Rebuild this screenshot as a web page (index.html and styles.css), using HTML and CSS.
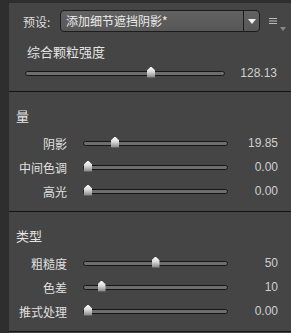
FILE: index.html
```html
<!DOCTYPE html>
<html lang="zh">
<head>
  <meta charset="UTF-8" />
  <title>颗粒</title>
  <link rel="stylesheet" href="styles.css">
</head>
<body>
  <div class="panel">
    <!-- 预设 + 综合强度 -->
    <section class="sec sec-top">
      <div class="preset-row">
        <span class="preset-label">预设:</span>
        <div class="dropdown">
          <span class="dropdown-text">添加细节遮挡阴影*</span>
          <span class="dropdown-btn"><span class="tri-down"></span></span>
        </div>
        <span class="menu-icon">
          <svg width="10" height="8" viewBox="0 0 10 8"><path d="M1 1.5h8M1 4h8M1 6.5h8" stroke="#bdbdbd" stroke-width="1"/></svg>
          <span class="menu-tri"></span>
        </span>
      </div>
      <div class="top-title">综合颗粒强度</div>
      <div class="top-slider">
        <div class="track"><span class="thumb" style="--p:0.637"></span></div>
        <span class="value">128.13</span>
      </div>
    </section>

    <!-- 量 -->
    <section class="sec">
      <div class="sec-title">量</div>
      <div class="row">
        <span class="label">阴影</span>
        <div class="track"><span class="thumb" style="--p:0.2"></span></div>
        <span class="value">19.85</span>
      </div>
      <div class="row">
        <span class="label">中间色调</span>
        <div class="track"><span class="thumb" style="--p:0"></span></div>
        <span class="value">0.00</span>
      </div>
      <div class="row">
        <span class="label">高光</span>
        <div class="track"><span class="thumb" style="--p:0"></span></div>
        <span class="value">0.00</span>
      </div>
    </section>

    <!-- 类型 -->
    <section class="sec">
      <div class="sec-title">类型</div>
      <div class="row">
        <span class="label">粗糙度</span>
        <div class="track"><span class="thumb" style="--p:0.5"></span></div>
        <span class="value">50</span>
      </div>
      <div class="row">
        <span class="label">色差</span>
        <div class="track"><span class="thumb" style="--p:0.1"></span></div>
        <span class="value">10</span>
      </div>
      <div class="row">
        <span class="label">推式处理</span>
        <div class="track"><span class="thumb" style="--p:0"></span></div>
        <span class="value">0.00</span>
      </div>
    </section>
  </div>
</body>
</html>
```
FILE: styles.css
```css
body {
  margin: 0;
  background: #2e2e2e;
  font-family: "Noto Sans CJK SC", "Liberation Sans", sans-serif;
  font-size: 12px;
  color: #e4e4e4;
  width: 291px;
  height: 333px;
  overflow: hidden;
}
.panel {
  margin: 3px 0 0 9px;
  background: #454545;
  height: 330px;
  display: flex;
  flex-direction: column;
}
.sec {
  border-bottom: 1px solid #141414;
  height: 120px;
  box-sizing: border-box;
}
.sec-top {
  height: 89px;
}
.preset-row {
  display: flex;
  align-items: center;
  height: 22px;
  margin-top: 7px;
}
.preset-label {
  width: 51px;
  padding-left: 14px;
  box-sizing: border-box;
  color: #dcdcdc;
}
.dropdown {
  display: flex;
  width: 200px;
  height: 22px;
  box-sizing: border-box;
  border: 1px solid #1c1c1c;
  border-radius: 4px;
  background: linear-gradient(#626262, #575757);
  overflow: hidden;
}
.dropdown-text {
  flex: 1;
  padding-left: 5px;
  line-height: 20px;
  color: #ececec;
}
.dropdown-btn {
  width: 15px;
  border-left: 1px solid #1c1c1c;
  display: flex;
  align-items: center;
  justify-content: center;
}
.tri-down {
  width: 0;
  height: 0;
  border-left: 4px solid transparent;
  border-right: 4px solid transparent;
  border-top: 5px solid #f2f2f2;
}
.menu-icon {
  position: relative;
  margin-left: 8px;
  width: 20px;
  height: 22px;
  display: flex;
  align-items: center;
}
.menu-tri {
  position: absolute;
  left: 12px;
  top: 17px;
  width: 0;
  height: 0;
  border-left: 3px solid transparent;
  border-right: 3px solid transparent;
  border-top: 4px solid #8a8a8a;
}
.top-title {
  margin: 11px 0 0 18px;
  font-size: 13px;
  line-height: 18px;
}
.top-slider {
  display: flex;
  align-items: center;
  margin-top: 6px;
  height: 12px;
}
.top-slider .track {
  margin-left: 16px;
  width: 198px;
}
.top-slider .value {
  width: 52px;
}
.sec-title {
  margin: 15px 0 0 7px;
  font-size: 13px;
  line-height: 18px;
  height: 18px;
}
.row {
  display: flex;
  align-items: center;
  height: 24px;
}
.sec-title + .row {
  margin-top: 6px;
}
.label {
  width: 58px;
  text-align: right;
  color: #e0e0e0;
}
.row .track {
  margin-left: 16px;
  width: 143px;
}
.row .value {
  width: 50px;
}
.track {
  position: relative;
  height: 3px;
  border: 1px solid #161616;
  border-radius: 3px;
  background: #6e6e6e;
}
.thumb {
  position: absolute;
  top: -5px;
  left: calc(var(--p) * (100% - 8px));
  width: 8px;
  height: 11px;
  background: linear-gradient(#ffffff, #d8d8d8 45%, #7c7c7c);
  clip-path: polygon(50% 0, 100% 35%, 100% 100%, 0 100%, 0 35%);
}
.value {
  text-align: right;
  font-family: "Liberation Sans", sans-serif;
  font-size: 12px;
  color: #cfcfcf;
}
```
